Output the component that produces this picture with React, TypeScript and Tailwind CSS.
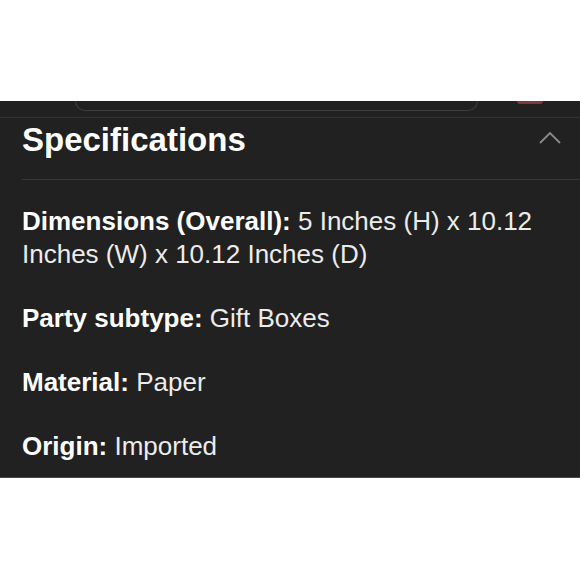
export default function App() {
  const specs = [
    { label: "Dimensions (Overall):", value: "5 Inches (H) x 10.12 Inches (W) x 10.12 Inches (D)" },
    { label: "Party subtype:", value: "Gift Boxes" },
    { label: "Material:", value: "Paper" },
    { label: "Origin:", value: "Imported" },
  ];

  return (
    <div
      className="w-[580px] h-[580px] bg-white flex flex-col overflow-hidden"
      style={{ fontFamily: '"Liberation Sans", Arial, sans-serif' }}
    >
      <div className="h-[101px] bg-white" />
      <div className="h-[377px] bg-[#212121] flex flex-col border-b border-[#4a4a4a]">
        {/* cropped bits of the search bar above */}
        <div className="h-[17px] flex items-start border-b border-[#343434]">
          <div className="ml-[75px] w-[403px] h-[10px] border-x border-b border-[#3e3e3e] rounded-b-[12px]" />
          <div className="ml-[39px] w-[26px] h-[3px] bg-[#7d3a3c] rounded-b-[3px]" />
        </div>

        <div className="h-[61px] px-[22px] pt-[5px] flex items-start justify-between">
          <h2 className="text-[33px] font-bold text-white leading-none">
            Specifications
          </h2>
          <svg width="22" height="14" viewBox="0 0 22 14" className="mr-[-3px] mt-[8px]">
            <path d="M1 12 L11 2 L21 12" fill="none" stroke="#8a8a8a" strokeWidth="1.8" />
          </svg>
        </div>

        <div className="ml-[22px] border-t border-[#3a3a3a]" />

        <div className="px-[22px] pt-[25px] flex flex-col gap-[31px] text-[26px] leading-[33px] text-[#ececec]">
          {specs.map((s) => (
            <p key={s.label}>
              <span className="font-bold text-white">{s.label}</span> {s.value}
            </p>
          ))}
        </div>
      </div>
      <div className="flex-1 bg-white" />
    </div>
  );
}
